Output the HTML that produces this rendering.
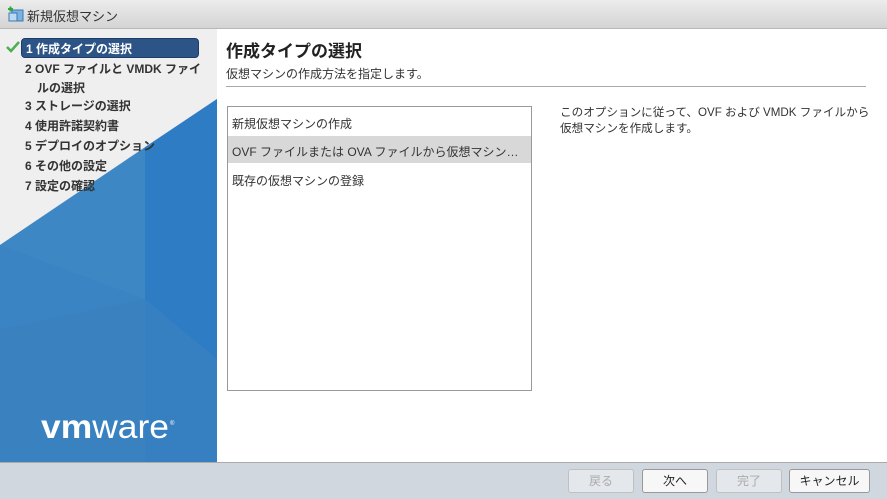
<!DOCTYPE html><html><head><meta charset="utf-8"><style>
*{margin:0;padding:0;box-sizing:border-box}
body{width:887px;height:499px;overflow:hidden;font-family:"Liberation Sans","Noto Sans CJK JP",sans-serif;background:#fff;position:relative;color:#333}
.tb{position:absolute;left:0;top:0;width:887px;height:29px;background:linear-gradient(#ececec,#d4d4d4);border-bottom:1px solid #b8b8b8}
.tb span{position:absolute;left:27px;top:6px;font-size:13px;color:#333}
.left{position:absolute;left:0;top:29px;width:217px;height:433px;background:#efefef;overflow:hidden}
.nav{position:absolute;left:25px;font-size:12px;font-weight:bold;color:#333}
.sel{position:absolute;left:21px;top:9px;width:178px;height:20px;background:#2d5486;border-radius:4px;border:1px solid #1d3d66}
.foot{position:absolute;left:0;top:462px;width:887px;height:37px;background:#d0d7df;border-top:1px solid #aaa}
.btn{position:absolute;top:469px;height:24px;width:66px;border:1px solid #999;border-radius:3px;background:#f7f7f7;font-size:12px;text-align:center;line-height:22px;color:#222}
.dis{color:#aaa;border-color:#c0c0c0;background:#e4e8ec}
.list{position:absolute;left:227px;top:106px;width:305px;height:285px;border:1px solid #999;background:#fff}
.it{position:absolute;left:4px;width:292px;font-size:12px;color:#333;white-space:nowrap;overflow:hidden;text-overflow:ellipsis}
</style></head><body>
<div class="tb"><svg style="position:absolute;left:7px;top:6px" width="17" height="17"><rect x="5" y="4" width="11" height="11" fill="#7ab3e0" stroke="#3a77b5"/><rect x="2" y="7" width="8" height="8" fill="#bcd9f2" stroke="#3a77b5"/><path d="M1 1h5M3.5 -1.5v5" stroke="#3a3" stroke-width="2" transform="translate(0,2)"/></svg><span>新規仮想マシン</span></div>
<div class="left">
<svg width="217" height="433" style="position:absolute;left:0;top:0">
<polygon points="217,70 217,433 0,433 0,216" fill="#3b84c4"/>
<polygon points="145,118 217,70 217,433 145,433" fill="#2c7bc4" opacity=".8"/>
<polygon points="0,216 145,118 145,270" fill="#4189c6" opacity=".6"/>
<polygon points="0,300 145,270 217,330 217,433 0,433" fill="#3a80bf" opacity=".7"/>
<text x="41" y="409" font-family="Liberation Sans,sans-serif" font-size="33" fill="#fff" font-weight="bold" textLength="128" lengthAdjust="spacingAndGlyphs">vm<tspan font-weight="normal">ware</tspan></text>
<text x="170" y="396" font-size="6" fill="#fff">®</text>
</svg>
<div class="sel"></div>
<svg style="position:absolute;left:6px;top:12px" width="14" height="12"><path d="M1 6l4 4 8-9" stroke="#4caf50" stroke-width="2.5" fill="none"/></svg>
<div class="nav" style="top:11px;left:26px;color:#fff">1 作成タイプの選択</div>
<div class="nav" style="top:31px">2 OVF ファイルと VMDK ファイ</div>
<div class="nav" style="top:50px;left:37px">ルの選択</div>
<div class="nav" style="top:68px">3 ストレージの選択</div>
<div class="nav" style="top:88px">4 使用許諾契約書</div>
<div class="nav" style="top:108px">5 デプロイのオプション</div>
<div class="nav" style="top:128px">6 その他の設定</div>
<div class="nav" style="top:148px">7 設定の確認</div>
</div>
<div style="position:absolute;left:226px;top:37px;font-size:17px;font-weight:bold;color:#222">作成タイプの選択</div>
<div style="position:absolute;left:226px;top:65px;font-size:12px">仮想マシンの作成方法を指定します。</div>
<div style="position:absolute;left:226px;top:86px;width:640px;height:1px;background:#aaa"></div>
<div class="list">
<div class="it" style="top:8px">新規仮想マシンの作成</div>
<div style="position:absolute;left:0;top:29px;width:303px;height:27px;background:#d8d8d8"></div>
<div class="it" style="top:36px">OVF ファイルまたは OVA ファイルから仮想マシンをデプロイ</div>
<div class="it" style="top:65px">既存の仮想マシンの登録</div>
</div>
<div style="position:absolute;left:560px;top:105px;font-size:11.6px;line-height:16px">このオプションに従って、OVF および VMDK ファイルから<br>仮想マシンを作成します。</div>
<div class="foot"></div>
<div class="btn dis" style="left:568px">戻る</div>
<div class="btn" style="left:642px">次へ</div>
<div class="btn dis" style="left:716px">完了</div>
<div class="btn" style="left:789px;width:81px">キャンセル</div>
</body></html>
